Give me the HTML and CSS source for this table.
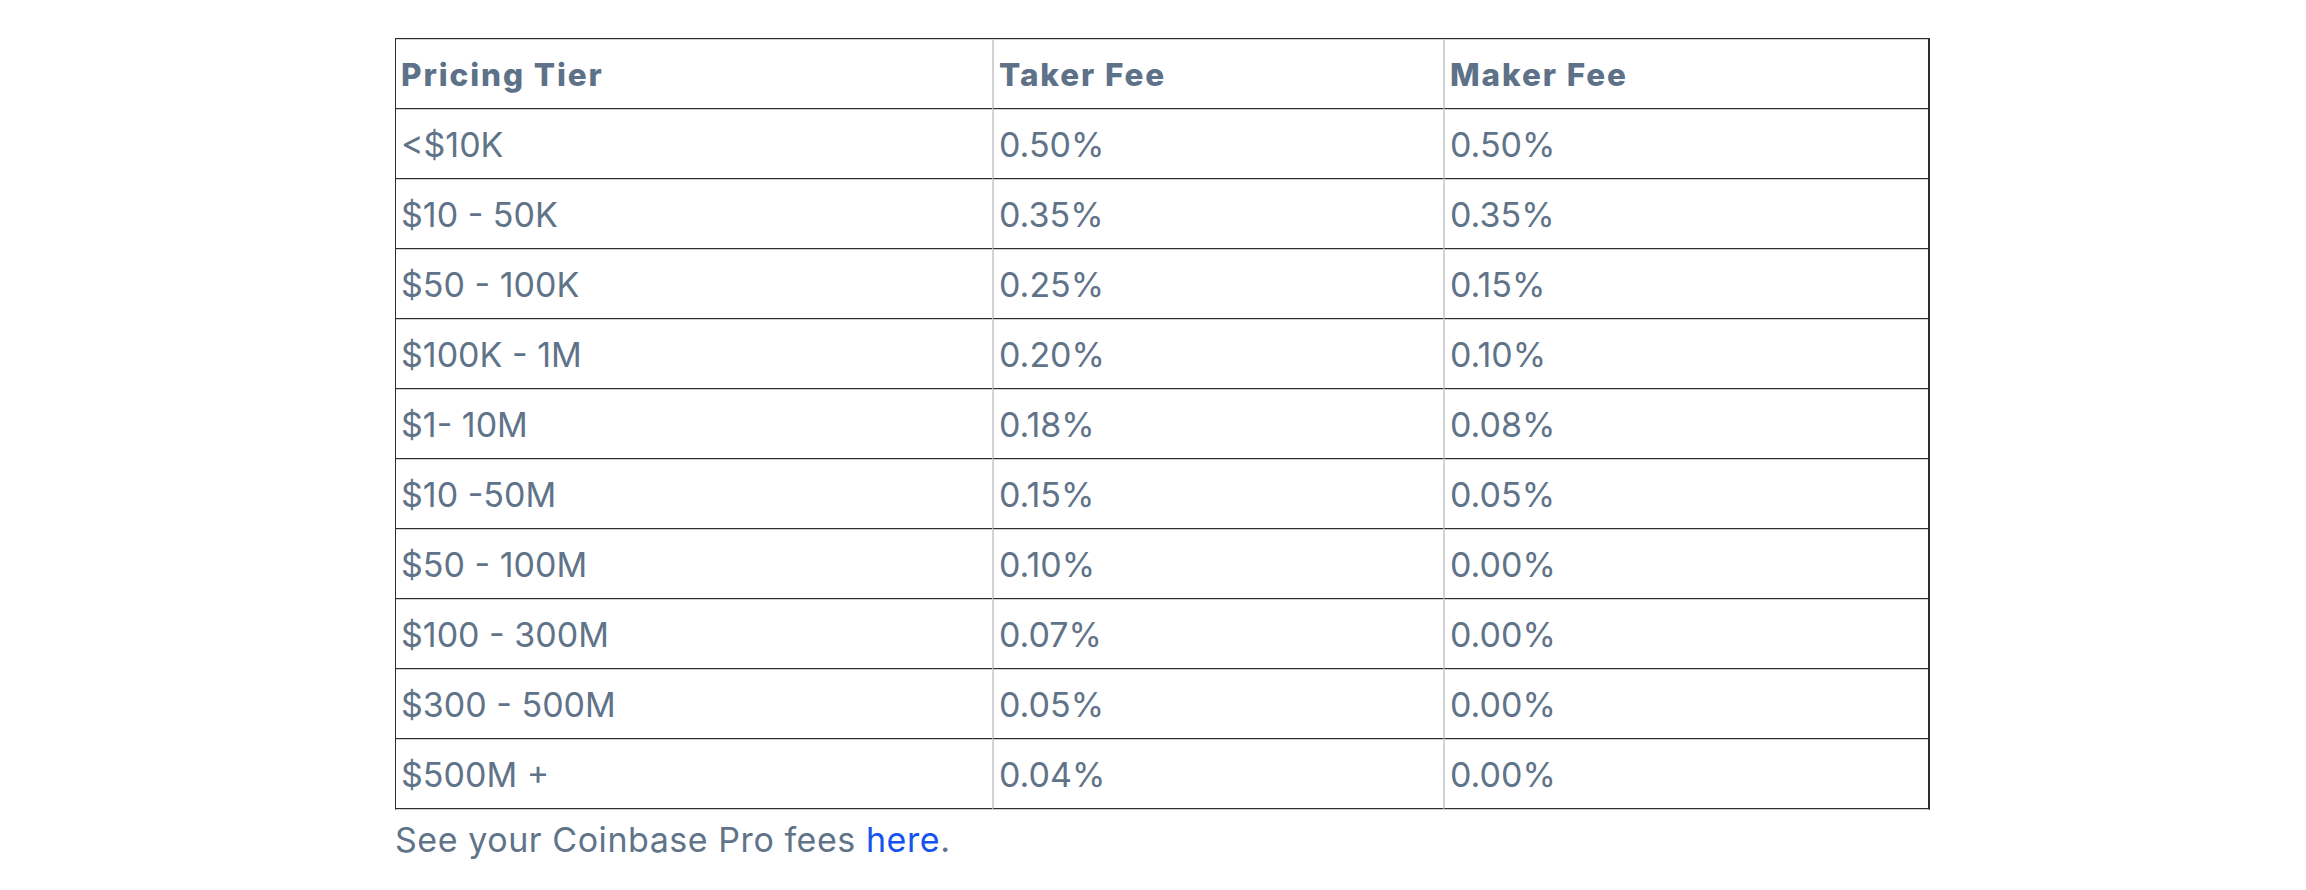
FILE: index.html
```html
<!DOCTYPE html>
<html lang="en">
<head>
<meta charset="utf-8">
<title>Coinbase Pro Fees</title>
<link rel="stylesheet" href="styles.css">
</head>
<body>
<div class="page">
  <table class="fees">
    <thead>
      <tr><th class="c1">Pricing Tier</th><th class="c2">Taker Fee</th><th class="c3">Maker Fee</th></tr>
    </thead>
    <tbody>
      <tr><td>&lt;$10K</td><td>0.50%</td><td>0.50%</td></tr>
      <tr><td>$10 - 50K</td><td>0.35%</td><td>0.35%</td></tr>
      <tr><td>$50 - 100K</td><td>0.25%</td><td>0.15%</td></tr>
      <tr><td>$100K - 1M</td><td>0.20%</td><td>0.10%</td></tr>
      <tr><td>$1- 10M</td><td>0.18%</td><td>0.08%</td></tr>
      <tr><td>$10 -50M</td><td>0.15%</td><td>0.05%</td></tr>
      <tr><td>$50 - 100M</td><td>0.10%</td><td>0.00%</td></tr>
      <tr><td>$100 - 300M</td><td>0.07%</td><td>0.00%</td></tr>
      <tr><td>$300 - 500M</td><td>0.05%</td><td>0.00%</td></tr>
      <tr><td>$500M +</td><td>0.04%</td><td>0.00%</td></tr>
    </tbody>
  </table>
  <p class="note">See your Coinbase Pro fees <a href="#">here</a>.</p>
</div>
</body>
</html>
```
FILE: styles.css
```css
html, body {
  margin: 0;
  padding: 0;
  background: #ffffff;
}
.page {
  padding: 38px 0 0 395px;
  font-family: Inter, "Liberation Sans", sans-serif;
  color: #5f7389;
}
.fees {
  border-collapse: separate;
  border-spacing: 0;
  table-layout: fixed;
  width: 1535px;
  border-top: 1px solid #2e2e2e;
  border-left: 1px solid #2e2e2e;
  border-right: 2px solid #2e2e2e;
  border-bottom: 1px solid #d2d2d2;
}
.fees th,
.fees td {
  box-sizing: border-box;
  height: 70px;
  padding: 0 5px;
  text-align: left;
  vertical-align: middle;
  border-top: 1px solid #d2d2d2;
  border-bottom: 1px solid #2e2e2e;
  white-space: nowrap;
}
.fees th + th,
.fees td + td {
  border-left: 2px solid #d2d2d2;
}
.fees th {
  font-size: 31.5px;
  font-weight: 800;
  letter-spacing: 1.9px;
  padding-top: 1px;
  color: #5d7188;
}
.fees td {
  font-size: 34px;
  font-weight: 400;
}
.c1 { width: 596px; }
.c2 { width: 451px; }
.c3 { width: 485px; }
.note {
  margin: 0;
  padding-top: 10px;
  font-size: 34px;
  line-height: 40px;
  letter-spacing: 0.55px;
}
.note a {
  color: #1652f0;
  text-decoration: none;
}
```
